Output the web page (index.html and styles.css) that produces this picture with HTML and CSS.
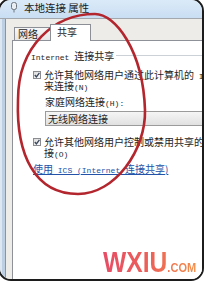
FILE: index.html
```html
<!DOCTYPE html>
<html lang="zh-CN">
<head>
<meta charset="utf-8">
<title>本地连接 属性</title>
<link rel="stylesheet" href="styles.css">
</head>
<body>
<div class="frame">
  <div class="titlebar">
    <svg class="ticon" width="6" height="11" viewBox="0 0 6 11"><rect x="0.5" y="0.5" width="5" height="7" rx="2" fill="#e9eef3" stroke="#6c747d"/><path d="M3 7.5V10.5" stroke="#6c747d"/></svg>
    <span class="title">本地连接 属性</span>
  </div>
  <div class="client">
    <div class="edge"></div>
    <div class="dialog">
      <div class="tabs">
        <div class="tab">网络</div>
        <div class="tab active">共享</div>
      </div>
      <div class="panel">
        <div class="group-head">
          <span class="group-label"><span class="en">Internet </span>连接共享</span>
          <span class="group-line"></span>
        </div>
        <div class="check-row first">
          <span class="checkbox"><svg width="6" height="6" viewBox="0 0 6 6"><path d="M0.8 3 L2.4 4.9 L5.4 0.8" fill="none" stroke="#38465c" stroke-width="1.3"/></svg></span>
          <div class="check-text">
            <div class="line">允许其他网络用户通过此计算机的<span class="en"> Internet </span>连接</div>
            <div class="line">来连接<span class="en">(N)</span></div>
          </div>
        </div>
        <div class="indent">
          <div class="field-label">家庭网络连接<span class="en">(H):</span></div>
          <div class="combo">无线网络连接</div>
        </div>
        <div class="check-row second">
          <span class="checkbox"><svg width="6" height="6" viewBox="0 0 6 6"><path d="M0.8 3 L2.4 4.9 L5.4 0.8" fill="none" stroke="#38465c" stroke-width="1.3"/></svg></span>
          <div class="check-text">
            <div class="line">允许其他网络用户控制或禁用共享的<span class="en"> Internet </span>连</div>
            <div class="line">接<span class="en">(O)</span></div>
          </div>
        </div>
        <a class="link" href="#">使用<span class="en"> ICS (Internet </span>连接共享)</a>
      </div>
    </div>
  </div>
  <svg class="mark" width="204" height="281" viewBox="0 0 204 281"><path d="M95,14 C115,14 143,50 145,110 C146,150 115,194 78,194 C35,194 16,155 18,100 C18,45 55,14 95,14 Z" fill="none" stroke="#b3262e" stroke-width="2.6"/></svg>
  <div class="watermark">WXIU<span class="dot">.COM</span></div>
</div>
</body>
</html>
```
FILE: styles.css
```css
body {
  margin: 0;
  background: #fff;
  overflow: hidden;
  font-family: "Noto Sans CJK SC", "Noto Sans", sans-serif;
}

.frame {
  position: relative;
  width: 206px;
  height: 283px;
  margin: -2px 0 0 -2px;
  box-sizing: border-box;
  border: 2px solid #1c1c1c;
  border-radius: 13px;
  overflow: hidden;
  display: flex;
  flex-direction: column;
  background: #eeece9;
}

.titlebar {
  height: 15px;
  padding: 0 0 3px 11px;
  border-bottom: 1px solid #a3a8ae;
  background: linear-gradient(#dbeaf8, #c9def3);
  display: flex;
  align-items: center;
}

.ticon {
  display: block;
  margin-right: 7px;
}

.title {
  font-size: 10.5px;
  line-height: 12px;
  color: #1a1a1a;
  white-space: nowrap;
}

.client {
  flex: 1;
  display: flex;
  min-height: 0;
}

.edge {
  width: 6px;
  background: linear-gradient(to right, #dce7f2 0 2px, #bccfe3 2px 5px, #8595a9 5px 6px);
}

.dialog {
  flex: 1;
  min-width: 0;
  display: flex;
  flex-direction: column;
  padding-left: 6px;
  background: #eeece9;
}

.tabs {
  height: 21px;
  display: flex;
  align-items: flex-end;
  padding-left: 2px;
}

.tab {
  box-sizing: border-box;
  width: 36px;
  height: 13px;
  padding-left: 3px;
  border: 1px solid #8c8f96;
  border-bottom: none;
  border-right: none;
  background: linear-gradient(#f7f7f7, #e6e6e6);
  font-size: 10px;
  line-height: 12px;
  color: #1e1e1e;
  white-space: nowrap;
}

.tab.active {
  position: relative;
  z-index: 1;
  width: 41px;
  height: 17px;
  margin-bottom: -1px;
  padding-left: 6px;
  padding-top: 1px;
  line-height: 11px;
  border-right: 1px solid #8c8f96;
  background: #fff;
}

.panel {
  flex: 1;
  min-height: 0;
  overflow: hidden;
  background: #fff;
  border-left: 1px solid #8e9197;
  border-top: 1px solid #8e9197;
  font-size: 10px;
  line-height: 11px;
  color: #1e1e1e;
}

.en {
  font-family: "Liberation Mono", monospace;
  font-size: 8px;
  line-height: 8px;
  white-space: pre;
}

.group-head {
  display: flex;
  align-items: center;
  height: 11px;
  margin: 9px 0 0 18px;
  white-space: nowrap;
}

.group-line {
  flex: 1;
  height: 1px;
  margin-left: 2px;
  background: #cbd1d6;
}

.check-row {
  display: flex;
  align-items: flex-start;
  margin-left: 20px;
}

.check-row.first {
  margin-top: 8px;
}

.check-row.second {
  margin-top: 10px;
}

.checkbox {
  flex: none;
  box-sizing: border-box;
  width: 8px;
  height: 8px;
  margin-top: 1.5px;
  border: 1px solid #8a8c8f;
  background: linear-gradient(135deg, #dcdcdc, #fbfbfb);
  display: flex;
  align-items: center;
  justify-content: center;
}

.checkbox svg {
  display: block;
}

.check-text {
  margin-left: 3px;
}

.line {
  height: 11px;
  white-space: nowrap;
}

.indent {
  margin-left: 32px;
}

.field-label {
  height: 11px;
  margin-top: 5px;
  white-space: nowrap;
}

.combo {
  box-sizing: border-box;
  width: 200px;
  height: 15px;
  margin-top: 4px;
  padding-left: 2px;
  border: 1px solid #9b9b9b;
  background: linear-gradient(#f5f5f5, #e1e1e1);
  line-height: 13px;
  white-space: nowrap;
}

.link {
  display: block;
  width: max-content;
  height: 11px;
  margin: 5px 0 0 20px;
  color: #2352a8;
  text-decoration: underline;
  white-space: nowrap;
}

.mark {
  position: absolute;
  left: 0;
  top: 0;
  pointer-events: none;
}

.watermark {
  position: absolute;
  left: 103px;
  top: 247.5px;
  font-family: "Liberation Sans", sans-serif;
  font-weight: bold;
  font-size: 29px;
  line-height: 29px;
  white-space: nowrap;
  transform: scaleX(0.85);
  transform-origin: left center;
  background: linear-gradient(90deg, #e64d66, #ec6158 50%, #f28f48);
  -webkit-background-clip: text;
  background-clip: text;
  color: transparent;
}

.watermark .dot {
  font-size: 13px;
}
```
